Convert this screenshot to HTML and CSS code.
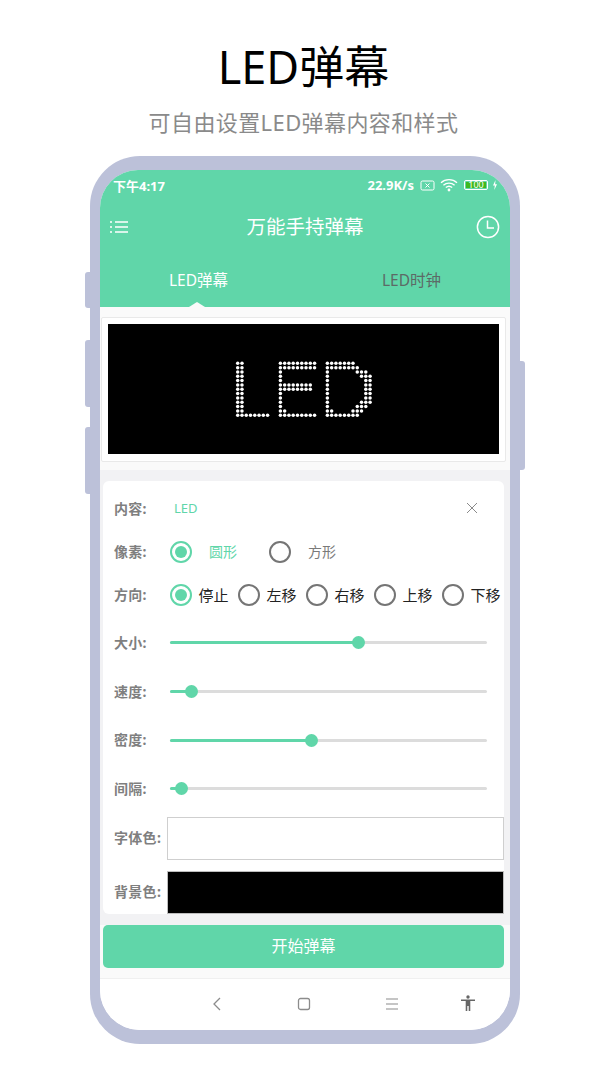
FILE: index.html
```html
<!DOCTYPE html>
<html lang="zh">
<head>
<meta charset="utf-8">
<title>LED弹幕</title>
<link rel="stylesheet" href="styles.css">
</head>
<body>
<header class="promo">
  <h1 class="promo-title">LED弹幕</h1>
  <p class="promo-sub">可自由设置LED弹幕内容和样式</p>
</header>
<div class="phone">
  <span class="side side-l1"></span>
  <span class="side side-l2"></span>
  <span class="side side-l3"></span>
  <span class="side side-r1"></span>
  <div class="screen">
    <div class="head">
      <div class="status">
        <span class="time">下午4:17</span>
        <span class="status-right">
          <span class="speed">22.9K/s</span>
          <svg class="ic-x" viewBox="0 0 15 11"><rect x="1" y="1" width="13" height="9" rx="1.500" fill="none" stroke="#fff"/><path d="M5.500 3.500l4 4m0-4l-4 4" stroke="#fff" fill="none"/></svg>
          <svg class="ic-wifi" viewBox="0 0 18 14"><path d="M1 4.800C5.500 .6 12.500 .6 17 4.800M3.400 7.200c3.200-2.900 8-2.900 11.200 0M5.800 9.600c1.900-1.600 4.500-1.600 6.400 0" stroke="#fff" stroke-width="1.300" fill="none"/><circle cx="9" cy="12" r="1.400" fill="#fff"/></svg>
          <span class="batt"><span class="batt-in">100</span></span>
          <svg class="ic-bolt" viewBox="0 0 6 10"><path d="M3.500 0L1 5.500h1.800L2.300 10 5 4.300H3.200z" fill="#fff"/></svg>
        </span>
      </div>
      <div class="bar">
        <svg class="ic-menu" viewBox="0 0 18 14"><path d="M5 2h13M5 7h13M5 12h13M0 2h2M0 7h2M0 12h2" stroke="#fff" stroke-width="1.600" fill="none"/></svg>
        <span class="bar-title">万能手持弹幕</span>
        <svg class="ic-clock" viewBox="0 0 24 24"><circle cx="12" cy="12" r="10.600" stroke="#fff" stroke-width="1.500" fill="none"/><path d="M11.500 5.500V13H18" stroke="#fff" stroke-width="1.500" fill="none"/></svg>
      </div>
      <div class="tabs">
        <span class="tab tab-on">LED弹幕</span>
        <span class="tab">LED时钟</span>
      </div>
    </div>
    <div class="body">
      <div class="led-card">
        <div class="led-panel"><svg id="led" class="led-svg" viewBox="0 0 391 130"></svg></div>
      </div>
      <div class="form">
        <div class="row row-content">
          <span class="lab">内容:</span>
          <span class="val">LED</span>
          <svg class="ic-close" viewBox="0 0 12 12"><path d="M1 1l10 10M11 1L1 11" stroke="#8a8a8a" stroke-width="1" fill="none"/></svg>
        </div>
        <div class="row row-pix">
          <span class="lab">像素:</span>
          <span class="radio on"></span><span class="opt opt-on">圆形</span>
          <span class="radio radio-second"></span><span class="opt">方形</span>
        </div>
        <div class="row row-dir">
          <span class="lab">方向:</span>
          <div class="dirs">
            <span class="dir"><span class="radio on"></span>停止</span>
            <span class="dir"><span class="radio"></span>左移</span>
            <span class="dir"><span class="radio"></span>右移</span>
            <span class="dir"><span class="radio"></span>上移</span>
            <span class="dir"><span class="radio"></span>下移</span>
          </div>
        </div>
        <div class="row row-slide">
          <span class="lab">大小:</span>
          <div class="track"><div class="fill" style="width:59.500%"><i class="thumb"></i></div></div>
        </div>
        <div class="row row-slide">
          <span class="lab">速度:</span>
          <div class="track"><div class="fill" style="width:6.800%"><i class="thumb"></i></div></div>
        </div>
        <div class="row row-slide">
          <span class="lab">密度:</span>
          <div class="track"><div class="fill" style="width:44.500%"><i class="thumb"></i></div></div>
        </div>
        <div class="row row-slide">
          <span class="lab">间隔:</span>
          <div class="track"><div class="fill" style="width:3.500%"><i class="thumb"></i></div></div>
        </div>
        <div class="row row-color">
          <span class="lab lab-c">字体色:</span>
          <div class="swatch swatch-w"></div>
        </div>
        <div class="row row-color row-color2">
          <span class="lab lab-c">背景色:</span>
          <div class="swatch swatch-k"></div>
        </div>
      </div>
      <div class="foot">
        <div class="start">开始弹幕</div>
      </div>
    </div>
    <div class="nav">
      <svg class="nv nv-back" viewBox="0 0 10 14"><path d="M8 1L2 7l6 6" stroke="#8c8c8c" stroke-width="1.300" fill="none"/></svg>
      <svg class="nv nv-home" viewBox="0 0 14 14"><rect x="1.500" y="1.500" width="11" height="11" rx="2" stroke="#8c8c8c" stroke-width="1.300" fill="none"/></svg>
      <svg class="nv nv-menu" viewBox="0 0 14 14"><path d="M1 2h12M1 7h12M1 12h12" stroke="#8c8c8c" stroke-width="1.200" fill="none"/></svg>
      <svg class="nv nv-acc" viewBox="0 0 16 16"><circle cx="8" cy="2" r="1.700" fill="#666"/><path d="M1 4.500h14v1.600H10.300V16H8.700v-5H7.300v5H5.700V6.100H1z" fill="#666"/></svg>
    </div>
  </div>
</div>
<script src="led.js"></script>
</body>
</html>
```
FILE: styles.css
```css
* { box-sizing: border-box; }
html, body { margin: 0; padding: 0; }
body {
  width: 607px;
  height: 1080px;
  background: #fff;
  font-family: "Noto Sans", "Noto Sans CJK SC", sans-serif;
  overflow: hidden;
}
.promo { height: 156px; padding-top: 37px; text-align: center; }
.promo-title { margin: 0; font-size: 45px; line-height: 60px; font-weight: 400; color: #000; }
.promo-sub { margin: 0; padding-top: 9px; font-size: 22px; line-height: 32px; color: #8a8a8a; letter-spacing: .4px; }
.phone {
  position: relative;
  width: 430px;
  height: 888px;
  margin-left: 90px;
  padding: 14px 10px;
  background: #bcc1d9;
  border-radius: 50px;
}
.side { position: absolute; width: 6px; background: #bcc1d9; border-radius: 3px 0 0 3px; left: -5px; }
.side-l1 { top: 116px; height: 36px; }
.side-l2 { top: 184px; height: 67px; }
.side-l3 { top: 271px; height: 67px; }
.side-r1 { top: 205px; height: 109px; left: auto; right: -5px; border-radius: 0 3px 3px 0; }
.screen {
  width: 410px;
  height: 860px;
  border-radius: 38px 38px 40px 40px;
  overflow: hidden;
  background: #fff;
  display: flex;
  flex-direction: column;
}
.head { background: #60d6a9; height: 137px; color: #fff; flex: none; }
.status { height: 30px; display: flex; justify-content: space-between; align-items: center; padding: 0 12px 0 13px; font-size: 13px; font-weight: 700; }
.status-right { display: flex; align-items: center; }
.ic-x { width: 15px; height: 11px; margin-left: 6px; }
.ic-wifi { width: 18px; height: 14px; margin-left: 5px; }
.batt { width: 24px; height: 10px; margin-left: 6px; border: 1px solid #fff; border-radius: 2px; padding: 1px; display: flex; }
.batt-in { flex: 1; background: #3fb81e; color: #fff; font-size: 9px; line-height: 6px; font-weight: 400; text-align: center; }
.ic-bolt { width: 6px; height: 10px; margin-left: 4px; }
.bar { height: 54px; display: flex; align-items: center; justify-content: space-between; padding: 0 10px; position: relative; }
.ic-menu { width: 18px; height: 14px; }
.ic-clock { width: 24px; height: 24px; }
.bar-title { font-size: 19.500px; line-height: 26px; position: absolute; left: 0; right: 0; text-align: center; }
.tabs { display: flex; height: 53px; padding-top: 13px; }
.tab { flex: 1; text-align: center; font-size: 15.500px; line-height: 26px; color: #5c6a66; position: relative; }
.tab-on { color: #fff; padding-right: 16px; }
.tab-on::after {
  content: "";
  position: absolute;
  left: 89px;
  bottom: 0;
  border: 8px solid transparent;
  border-top: 0;
  border-bottom: 5px solid #fafafa;
}
.body { flex: 1; background: #f2f2f4; display: flex; flex-direction: column; min-height: 0; position: relative; }
.led-card { background: #fafafa; height: 163px; padding: 10px 4px 8px 1px; flex: none; }
.led-panel { height: 145px; background: #fff; border: 1px solid #e9e9e9; border-radius: 2px; padding: 6px; }
.led-svg { display: block; width: 391px; height: 130px; background: #000; }
.form { background: #fff; margin: 11px 6px 0 3px; height: 433px; border-radius: 6px; flex: none; }
.row { display: flex; align-items: center; position: relative; }
.lab { font-size: 14px; font-weight: 700; color: #7f7f7f; width: 60px; padding: 0 0 2px 11px; flex: none; letter-spacing: .3px; }
.row-content { height: 54px; }
.row-content .lab { padding-bottom: 0; }
.val { font-size: 13px; color: #60d6a9; margin-left: 11px; }
.ic-close { width: 12px; height: 12px; position: absolute; left: 363px; top: 21px; }
.row-pix { height: 33px; }
.radio { width: 22px; height: 22px; border: 2px solid #757575; border-radius: 50%; flex: none; display: inline-block; position: relative; }
.radio.on { border-color: #60d6a9; }
.radio.on::after { content: ""; position: absolute; inset: 3px; border-radius: 50%; background: #60d6a9; }
.row-pix .radio { margin-left: 7px; }
.row-pix .radio-second { margin-left: 32px; }
.opt { font-size: 14px; color: #7a7a7a; margin-left: 17px; padding-bottom: 2px; }
.opt-on { color: #60d6a9; }
.row-dir { height: 33px; margin-top: 10px; }
.dirs { display: flex; margin-left: 7px; }
.dir { display: flex; align-items: center; font-size: 15px; line-height: 22px; color: #222; width: 68px; flex: none; white-space: nowrap; }
.dir .radio { margin-right: 6.500px; }
.row-slide { height: 48.700px; }
.row-dir + .row-slide { margin-top: 7.500px; }
.track { width: 317px; margin-left: 7px; height: 3px; background: #dcdcdc; border-radius: 2px; position: relative; }
.fill { height: 100%; background: #60d6a9; border-radius: 2px; position: relative; }
.thumb { position: absolute; right: -6.500px; top: -5px; width: 13px; height: 13px; border-radius: 50%; background: #60d6a9; }
.row-color { height: 43px; margin-top: 3.500px; }
.row-color2 { margin-top: 11px; }
.lab-c { width: 64px; white-space: nowrap; }
.swatch { width: 337px; height: 100%; flex: none; }
.swatch-w { background: #fff; border: 1px solid #cfcfcf; }
.swatch-k { background: #000; border: 1px solid #bdbdbd; }
.foot { flex: 1; margin-top: 11px; background: #fafafa; }
.start { margin: 0 6px 0 3px; height: 43px; background: #60d6a9; border-radius: 5px; color: #fff; font-size: 16px; line-height: 43px; text-align: center; }
.nav { flex: none; height: 52px; background: #fff; border-top: 1px solid #f0f0f0; position: relative; }
.nv { position: absolute; top: 18px; width: 14px; height: 14px; }
.nv-back { left: 112px; width: 10px; }
.nv-home { left: 197px; }
.nv-menu { left: 285px; }
.nv-acc { left: 360px; width: 16px; height: 16px; top: 16px; }
```
FILE: led.js
```js
var rows = [
  "11000000001111111110011111110000",
  "11000000001111111110011111111000",
  "11000000001000000000010000001110",
  "11000000001000000000010000000111",
  "11000000001000000000010000000011",
  "11000000001111111100010000000011",
  "11000000001111111100010000000011",
  "11000000001000000000010000000011",
  "11000000001000000000010000000011",
  "11000000001000000000010000000111",
  "11000000001000000000010000001110",
  "11000000001100000000011000011100",
  "11111111001111111110011111111000"
];
var svg = document.getElementById("led");
var ns = "http://www.w3.org/2000/svg";
rows.forEach(function (row, y) {
  row.split("").forEach(function (c, x) {
    if (c !== "1") return;
    var dot = document.createElementNS(ns, "circle");
    dot.setAttribute("cx", 129.7 + x * 4.27);
    dot.setAttribute("cy", 39.3 + y * 4.33);
    dot.setAttribute("r", 1.75);
    dot.setAttribute("fill", "#fff");
    svg.appendChild(dot);
  });
});
```
